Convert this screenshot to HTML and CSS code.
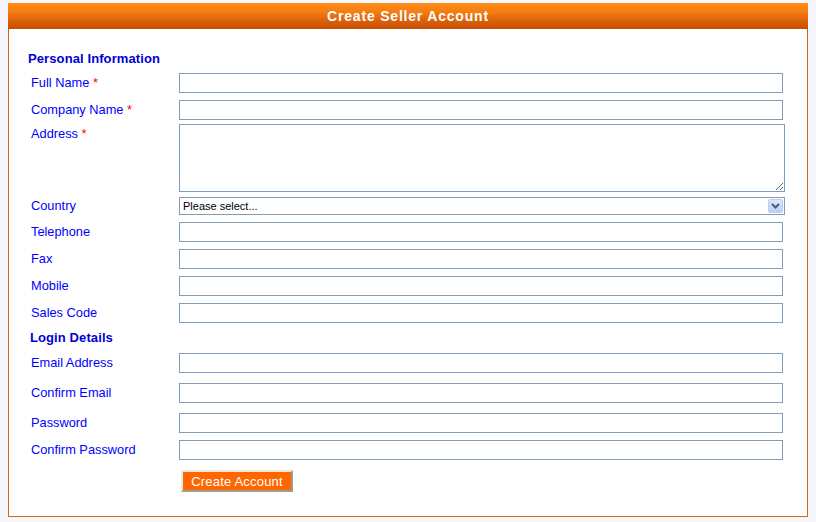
FILE: index.html
```html
<!DOCTYPE html>
<html lang="en">
<head>
<meta charset="utf-8">
<title>Create Seller Account</title>
<link rel="stylesheet" href="styles.css">
</head>
<body>
<div class="panel">
  <div class="panel-head">Create Seller Account</div>
  <form class="panel-body">
    <h2 class="section">Personal Information</h2>
    <div class="row"><label class="lbl">Full Name <span class="req">*</span></label><input class="field" type="text"></div>
    <div class="row gap7"><label class="lbl">Company Name <span class="req">*</span></label><input class="field" type="text"></div>
    <div class="row gap4"><label class="lbl">Address <span class="req">*</span></label><textarea class="area"></textarea></div>
    <div class="row gap5"><label class="lbl lbl-short">Country</label>
      <div class="select-wrap">
        <select class="sel"><option>Please select...</option></select>
        <span class="sel-btn"><svg width="9" height="6" viewBox="0 0 9 6"><polyline points="1,1 4.5,4.5 8,1" fill="none" stroke="#4a5d86" stroke-width="2"/></svg></span>
      </div>
    </div>
    <div class="row gap7"><label class="lbl">Telephone</label><input class="field" type="text"></div>
    <div class="row gap7"><label class="lbl">Fax</label><input class="field" type="text"></div>
    <div class="row gap7"><label class="lbl">Mobile</label><input class="field" type="text"></div>
    <div class="row gap7"><label class="lbl">Sales Code</label><input class="field" type="text"></div>
    <h2 class="section section-login">Login Details</h2>
    <div class="row"><label class="lbl">Email Address</label><input class="field" type="text"></div>
    <div class="row gap10"><label class="lbl">Confirm Email</label><input class="field" type="text"></div>
    <div class="row gap10"><label class="lbl">Password</label><input class="field" type="password"></div>
    <div class="row gap7"><label class="lbl">Confirm Password</label><input class="field" type="password"></div>
    <div class="row gap10"><span class="lbl"></span><button class="btn" type="button">Create Account</button></div>
  </form>
</div>
</body>
</html>
```
FILE: styles.css
```css
html, body {
  background: #f6f7fd;
}
body {
  margin: 3px 8px 0;
  font-family: "Liberation Sans", Arial, sans-serif;
}
.panel {
  width: 800px;
}
.panel-head {
  height: 26px;
  line-height: 26px;
  text-align: center;
  color: #ffffff;
  font-weight: bold;
  font-size: 14px;
  letter-spacing: 0.8px;
  background: linear-gradient(#ff8c17 0%, #f57d10 35%, #d8600a 70%, #c84d02 100%);
}
.panel-body {
  display: block;
  margin: 0;
  background: #ffffff;
  border: 1px solid #cf6a10;
  border-top: none;
  padding: 22px 0 24px 19px;
}
.section {
  margin: 0 0 6px;
  font-size: 13px;
  line-height: 16px;
  font-weight: bold;
  color: #0000d6;
  letter-spacing: 0.1px;
}
.section-login {
  margin-top: 7px;
  margin-left: 2px;
  margin-bottom: 7px;
}
.row {
  display: flex;
  align-items: flex-start;
}
.gap4 { margin-top: 4px; }
.gap5 { margin-top: 5px; }
.gap7 { margin-top: 7px; }
.gap10 { margin-top: 10px; }
.lbl {
  flex: 0 0 151px;
  box-sizing: border-box;
  padding-left: 3px;
  font-size: 12.8px;
  line-height: 20px;
  color: #0000ff;
}
.lbl-short {
  line-height: 18px;
}
.req {
  color: #ff0000;
}
.field {
  box-sizing: border-box;
  width: 604px;
  height: 20px;
  margin: 0;
  padding: 1px 3px;
  border: 1px solid #7f9db9;
  background: #ffffff;
  font: 12px "Liberation Sans", Arial, sans-serif;
  outline: none;
}
.area {
  display: block;
  box-sizing: border-box;
  width: 606px;
  height: 68px;
  margin: 0;
  padding: 2px;
  border: 1px solid #7f9db9;
  font: 12px "Liberation Sans", Arial, sans-serif;
  resize: both;
}
.select-wrap {
  position: relative;
  width: 606px;
  height: 18px;
}
.sel {
  display: block;
  appearance: none;
  -webkit-appearance: none;
  box-sizing: border-box;
  width: 606px;
  height: 18px;
  margin: 0;
  padding: 0 0 0 3px;
  border: 1px solid #7f9db9;
  border-radius: 0;
  background: #ffffff;
  color: #000000;
  font: 11px "Liberation Sans", Arial, sans-serif;
  line-height: 16px;
}
.sel-btn {
  position: absolute;
  top: 2px;
  right: 2px;
  width: 15px;
  height: 14px;
  box-sizing: border-box;
  border: 1px solid #b9cdf6;
  border-radius: 2px;
  background: linear-gradient(#dde7fd, #bccff7);
  display: flex;
  align-items: center;
  justify-content: center;
  pointer-events: none;
}
.sel-btn svg {
  display: block;
}
.btn {
  margin: 0 0 0 2px;
  width: 112px;
  height: 22px;
  padding: 0;
  box-sizing: border-box;
  border: 2px solid;
  border-color: #efe6d8 #9d9b92 #9d9b92 #efe6d8;
  background: #ff6600;
  color: #ffffff;
  font: 13px "Liberation Sans", Arial, sans-serif;
  letter-spacing: 0.2px;
  cursor: pointer;
}
```
